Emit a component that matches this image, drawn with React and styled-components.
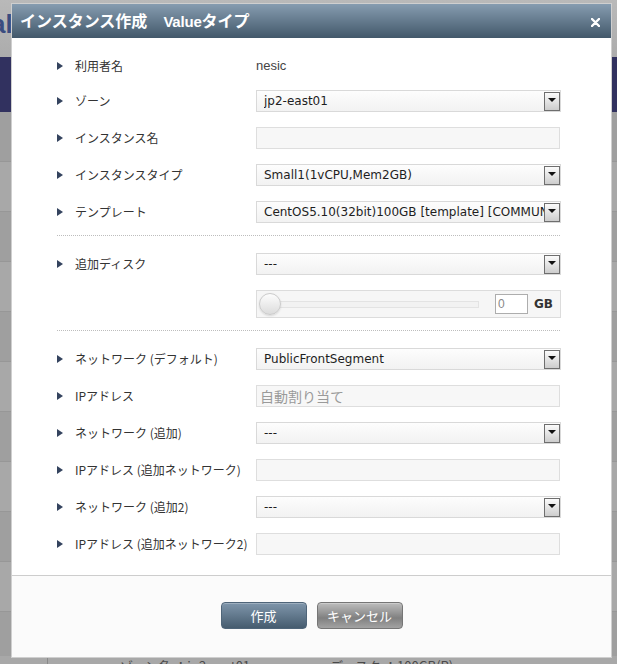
import styled, { createGlobalStyle } from 'styled-components';

const GlobalStyle = createGlobalStyle`
    html, body {
        margin: 0;
        padding: 0;
    }
    body {
        width: 617px;
        height: 664px;
        overflow: hidden;
        background: #a8a8a8;
        font-family: 'Noto Sans CJK JP', 'Noto Sans', sans-serif;
    }
`;

//! page behind the modal (dimmed)
const Page = styled.div`
    height: 680px;
    display: flex;
    flex-direction: column;
    overflow: hidden;
    background: #a8a8a8;
`;

const PageHeader = styled.header`
    height: 57px;
    flex-shrink: 0;
    background: linear-gradient(#b9b9b9, #acacac);
    display: flex;
    align-items: center;
`;

const Logo = styled.span`
    margin-left: -61px;
    margin-top: -8px;
    font: bold 26px 'Liberation Sans', Arial, sans-serif;
    color: #3a4c80;
`;

const NavBand = styled.nav`
    height: 55px;
    flex-shrink: 0;
    background: #31315f;
`;

const List = styled.div`
    flex: 1;
    display: flex;
    flex-direction: column;
    overflow: hidden;
`;

const ListRow = styled.div`
    height: 49px;
    flex-shrink: 0;
    border-bottom: 1px solid #979797;
    background: ${(p) => (p.$dark ? '#9f9f9f' : '#a8a8a8')};
`;

const BottomInfo = styled.div`
    height: 24px;
    flex-shrink: 0;
    padding-left: 47px;
    display: flex;
`;

const InfoCell = styled.div`
    flex: 1;
    border-left: 1px solid #8a8a8a;
    padding: 1px 0 0 72px;
    display: flex;
    font-size: 13px;
    line-height: 18px;
    color: #4a4a4a;

    span:first-child {
        width: 210px;
    }
`;

//! modal
const Dialog = styled.div`
    position: absolute;
    left: 11px;
    top: 3px;
    width: 601px;
    height: 655px;
    box-sizing: border-box;
    border: 1px solid #cfcfcf;
    background: #fff;
    display: flex;
    flex-direction: column;
`;

const TitleBar = styled.div`
    height: 34px;
    flex-shrink: 0;
    display: flex;
    align-items: center;
    justify-content: space-between;
    padding: 0 11px 0 8px;
    background: linear-gradient(#869cb0, #42586a);
    color: #fff;
`;

const Title = styled.h3`
    margin: -2px 0 0;
    font-size: 16px;
    font-weight: bold;
    white-space: pre;

    span {
        font: bold 15px 'Liberation Sans', Arial, sans-serif;
        letter-spacing: -0.2px;
    }
`;

const CloseButton = styled.span`
    display: flex;
    margin-top: 2px;
`;

const Body = styled.div`
    flex: 1;
    padding: 19px 50px 0 45px;
`;

const Section = styled.div`
    display: grid;
    grid-template-columns: 199px 305px;
    row-gap: 15px;
    align-items: center;
`;

const Separator = styled.div`
    border-top: 1px dotted #bdbdbd;
    margin: 12px 1px 17px 0;
`;

const Label = styled.div`
    display: flex;
    align-items: center;
    font-size: 12px;
    line-height: 18px;
    color: #333;
    white-space: nowrap;

    &::before {
        content: '';
        width: 0;
        height: 0;
        border-left: 6px solid #34435e;
        border-top: 4px solid transparent;
        border-bottom: 4px solid transparent;
        margin-right: 12px;
    }
`;

const StaticValue = styled.div`
    font: 13px 'Liberation Sans', Arial, sans-serif;
    color: #444;
    line-height: 18px;
    margin-top: -1px;
`;

const SelectBox = styled.div`
    height: 22px;
    box-sizing: border-box;
    border: 1px solid #d9d9d9;
    background: linear-gradient(#fdfdfd, #f2f2f2);
    display: flex;
    align-items: center;
    padding-left: 7px;
    font: 12px 'DejaVu Sans', Verdana, sans-serif;
    color: #1e1e1e;
`;

const SelectText = styled.span`
    flex: 1;
    min-width: 0;
    overflow: hidden;
    white-space: nowrap;
`;

const SelectArrow = styled.span`
    width: 16px;
    height: 19px;
    box-sizing: border-box;
    flex-shrink: 0;
    border: 1px solid #6e6e6e;
    background: linear-gradient(#fbfbfb, #cdcdcd);
    display: flex;
    align-items: center;
    justify-content: center;

    &::after {
        content: '';
        margin-top: -3px;
        border-top: 4px solid #111;
        border-left: 4px solid transparent;
        border-right: 4px solid transparent;
    }
`;

const TextInput = styled.div`
    height: 22px;
    width: 304px;
    box-sizing: border-box;
    border: 1px solid #dedede;
    background: #f7f7f7;
    padding-left: 3px;
    display: flex;
    align-items: center;
    font-size: 14px;
    color: #9a9a9a;
`;

const SliderBox = styled.div`
    height: 28px;
    box-sizing: border-box;
    border: 1px solid #dcdcdc;
    background: #f6f6f6;
    display: flex;
    align-items: center;
    padding-left: 2px;
`;

const SliderTrack = styled.div`
    position: relative;
    width: 220px;
    height: 22px;

    &::before {
        content: '';
        position: absolute;
        left: 10px;
        right: 0;
        top: 8px;
        height: 5px;
        border: 1px solid #e3e3e3;
        background: #f2f2f2;
    }
`;

const SliderThumb = styled.span`
    position: absolute;
    left: 0;
    top: 0;
    width: 22px;
    height: 22px;
    box-sizing: border-box;
    border-radius: 50%;
    border: 1px solid #cbcbcb;
    background: linear-gradient(#fdfdfd, #dcdcdc);
    box-shadow: 0 1px 2px rgba(0, 0, 0, 0.12);
`;

const NumberInput = styled.div`
    margin-left: 16px;
    width: 33px;
    height: 20px;
    box-sizing: border-box;
    border: 1px solid #adadad;
    background: #fff;
    padding-left: 2px;
    display: flex;
    align-items: center;
    font: 12px 'Liberation Sans', Arial, sans-serif;
    color: #888;
`;

const Unit = styled.span`
    margin-left: 6px;
    font: bold 12px 'DejaVu Sans', Verdana, sans-serif;
    color: #333;
`;

const Footer = styled.div`
    height: 79px;
    flex-shrink: 0;
    border-top: 1px solid #cdcdcd;
    background: #fbfbfb;
    display: flex;
    align-items: center;
    justify-content: center;
    gap: 10px;
    padding-bottom: 2px;
`;

const Button = styled.button`
    width: 86px;
    height: 27px;
    border-radius: 4px;
    font-family: 'Noto Sans CJK JP', sans-serif;
    font-size: 13px;
    color: #fff;
    cursor: pointer;
    padding: 0;
    border: 1px solid ${(p) => (p.$primary ? '#4f6579' : '#767676')};
    background: ${(p) =>
        p.$primary
            ? 'linear-gradient(#7f96ab, #465c6f)'
            : 'linear-gradient(#bdbdbd 0%, #959595 40%, #808080 60%, #a3a3a3 100%)'};
    box-shadow: inset 0 1px 0 rgba(255, 255, 255, 0.25);
`;

const Select = ({ value }) => (
    <SelectBox>
        <SelectText>{value}</SelectText>
        <SelectArrow />
    </SelectBox>
);

const Field = ({ label, children }) => (
    <>
        <Label>{label}</Label>
        {children}
    </>
);

const App = () => {
    return (
        <>
            <GlobalStyle />
            <Page>
                <PageHeader>
                    <Logo>Portal</Logo>
                </PageHeader>
                <NavBand />
                <List>
                    {Array.from({ length: 11 }).map((_, i) => (
                        <ListRow key={i} $dark={i % 2 === 0} />
                    ))}
                </List>
                <BottomInfo>
                    <InfoCell>
                        <span>ゾーン名 ：jp2-east01</span>
                        <span>ディスク ：100GB(R)</span>
                    </InfoCell>
                </BottomInfo>
            </Page>

            <Dialog>
                <TitleBar>
                    <Title>
                        インスタンス作成　<span>Value</span>タイプ
                    </Title>
                    <CloseButton>
                        <svg width='9' height='9' viewBox='0 0 9 9'>
                            <path d='M1 1 L8 8 M8 1 L1 8' stroke='#fff' strokeWidth='2.4' strokeLinecap='round' />
                        </svg>
                    </CloseButton>
                </TitleBar>

                <Body>
                    <Section>
                        <Field label='利用者名'>
                            <StaticValue>nesic</StaticValue>
                        </Field>
                        <Field label='ゾーン'>
                            <Select value='jp2-east01' />
                        </Field>
                        <Field label='インスタンス名'>
                            <TextInput />
                        </Field>
                        <Field label='インスタンスタイプ'>
                            <Select value='Small1(1vCPU,Mem2GB)' />
                        </Field>
                        <Field label='テンプレート'>
                            <Select value='CentOS5.10(32bit)100GB [template] [COMMUNITY]' />
                        </Field>
                    </Section>

                    <Separator />

                    <Section>
                        <Field label='追加ディスク'>
                            <Select value='---' />
                        </Field>
                        <div />
                        <SliderBox>
                            <SliderTrack>
                                <SliderThumb />
                            </SliderTrack>
                            <NumberInput>0</NumberInput>
                            <Unit>GB</Unit>
                        </SliderBox>
                    </Section>

                    <Separator />

                    <Section>
                        <Field label='ネットワーク (デフォルト)'>
                            <Select value='PublicFrontSegment' />
                        </Field>
                        <Field label='IPアドレス'>
                            <TextInput>自動割り当て</TextInput>
                        </Field>
                        <Field label='ネットワーク (追加)'>
                            <Select value='---' />
                        </Field>
                        <Field label='IPアドレス (追加ネットワーク)'>
                            <TextInput />
                        </Field>
                        <Field label='ネットワーク (追加2)'>
                            <Select value='---' />
                        </Field>
                        <Field label='IPアドレス (追加ネットワーク2)'>
                            <TextInput />
                        </Field>
                    </Section>
                </Body>

                <Footer>
                    <Button $primary>作成</Button>
                    <Button>キャンセル</Button>
                </Footer>
            </Dialog>
        </>
    );
};

export default App;
